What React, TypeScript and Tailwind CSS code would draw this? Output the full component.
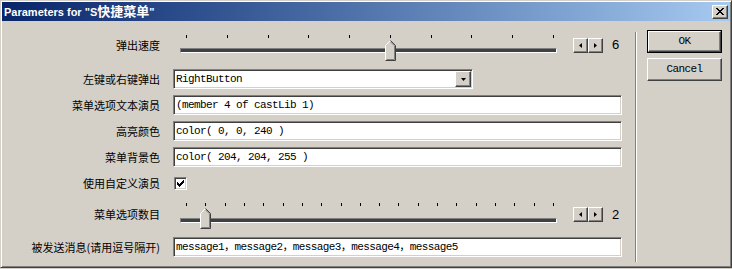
import React from 'react'

const sunken =
    'border border-t-[#808080] border-l-[#808080] border-b-white border-r-white shadow-[inset_1px_1px_0_#404040,inset_-1px_-1px_0_#d4d0c8] bg-white'
const raised =
    'border border-t-white border-l-white border-b-[#404040] border-r-[#404040] shadow-[inset_-1px_-1px_0_#808080] bg-[#d4d0c8]'
const mono = "[font-family:'Liberation_Mono','Noto_Sans_CJK_SC',monospace] text-[11px] tracking-[-0.6px] text-black"
const cjk = "[font-family:'Noto_Sans_CJK_SC',sans-serif] text-[11px] leading-none text-black"

const Thumb = () => (
    <svg width="11" height="21" viewBox="0 0 11 21">
        <polygon points="0,5 5,0 11,6 11,21 0,21" fill="#d4d0c8" />
        <polyline points="0.5,20.5 0.5,5.5 5.5,0.5" fill="none" stroke="#ffffff" />
        <polyline points="5.5,0.5 10.5,5.5 10.5,20.5 0.5,20.5" fill="none" stroke="#404040" />
        <polyline points="5.5,1.9 9.5,5.9 9.5,19.5 1.5,19.5" fill="none" stroke="#808080" />
    </svg>
)

const Slider = ({ count, index, trackTop }: { count: number; index: number; trackTop: number }) => {
    const first = 13
    const last = 380
    const step = (last - first) / (count - 1)
    return (
        <div className="relative w-[384px] h-full">
            {Array.from({ length: count }).map((_, i) => (
                <div
                    key={i}
                    className="absolute top-[5px] w-px h-[3px] bg-black"
                    style={{ left: Math.round(first + step * i) }}
                />
            ))}
            <div
                className="absolute left-[7px] right-0 h-[5px] bg-[#404040] border-t border-l border-t-[#808080] border-l-[#808080] border-b border-r border-b-white border-r-white"
                style={{ top: trackTop }}
            />
            <div className="absolute top-[10px]" style={{ left: Math.round(first + step * index) - 5 }}>
                <Thumb />
            </div>
        </div>
    )
}

const Spin = ({ value }: { value: string }) => (
    <div className="flex flex-row items-center ml-4">
        <div className={`w-[15px] h-[15px] flex items-center justify-center ${raised}`}>
            <svg width="3" height="5" viewBox="0 0 3 5">
                <polygon points="3,0 3,5 0,2.5" fill="#000" />
            </svg>
        </div>
        <div className={`w-[15px] h-[15px] flex items-center justify-center ${raised}`}>
            <svg width="3" height="5" viewBox="0 0 3 5">
                <polygon points="0,0 0,5 3,2.5" fill="#000" />
            </svg>
        </div>
        <span className="ml-[9px] [font-family:'Liberation_Sans',sans-serif] text-[13px] text-black">{value}</span>
    </div>
)

const Row = ({ label, className, children }: { label: string; className: string; children: React.ReactNode }) => (
    <div className={`flex flex-row items-center ${className}`}>
        <div className={`w-[158px] text-right whitespace-nowrap ${cjk}`}>{label}</div>
        <div className="ml-[13px] flex flex-row items-center h-full">{children}</div>
    </div>
)

const TextField = ({ value }: { value: string }) => (
    <div className={`w-[449px] h-[20px] flex items-center pl-[2px] ${sunken}`}>
        <span className={`${mono} whitespace-nowrap`}>{value}</span>
    </div>
)

const App: React.FC = () => {
    return (
        <div className="w-[732px] h-[269px] bg-[#d4d0c8] overflow-hidden">
            <div className="w-[732px] h-[268px] flex flex-col bg-[#d4d0c8] border-t border-l border-t-[#d4d0c8] border-l-[#d4d0c8] border-b border-r border-b-[#404040] border-r-[#404040] shadow-[inset_1px_1px_0_#ffffff,inset_-1px_-1px_0_#808080] p-px">
                {/* title bar */}
                <header className="h-[19px] flex flex-row items-center justify-between bg-gradient-to-r from-[#0a246a] to-[#a6caf0] pl-[2px] pr-[2px]">
                    <h1 className="[font-family:'Liberation_Sans','Noto_Sans_CJK_SC',sans-serif] text-[11px] font-bold text-white whitespace-nowrap leading-none">
                        Parameters for "S<span className="text-[13px]">快捷菜单</span>"
                    </h1>
                    <button type="button" className={`w-[16px] h-[14px] flex items-center justify-center ${raised}`}>
                        <svg width="8" height="7" viewBox="0 0 8 7" shapeRendering="crispEdges">
                            <path d="M0 0h2v1h-2zM6 0h2v1h-2zM1 1h2v1h-2zM5 1h2v1h-2zM2 2h4v1h-4zM3 3h2v1h-2zM2 4h4v1h-4zM1 5h2v1h-2zM5 5h2v1h-2zM0 6h2v1h-2zM6 6h2v1h-2z" fill="#000" />
                        </svg>
                    </button>
                </header>

                <div className="flex flex-row flex-1">
                    <section className="w-[633px] flex flex-col pt-[9px]">
                        <Row label="弹出速度" className="h-[30px]">
                            <Slider count={10} index={5} trackTop={18} />
                            <Spin value="6" />
                        </Row>

                        <Row label="左键或右键弹出" className="h-[20px] mt-[9px]">
                            <div className={`w-[300px] h-[20px] flex flex-row items-center justify-between pl-[2px] pr-px ${sunken}`}>
                                <span className={mono}>RightButton</span>
                                <div className={`w-[16px] h-[16px] flex items-center justify-center ${raised}`}>
                                    <svg width="5" height="3" viewBox="0 0 5 3">
                                        <polygon points="0,0 5,0 2.5,3" fill="#000" />
                                    </svg>
                                </div>
                            </div>
                        </Row>

                        <Row label="菜单选项文本演员" className="h-[20px] mt-[6px]">
                            <TextField value="(member 4 of castLib 1)" />
                        </Row>

                        <Row label="高亮颜色" className="h-[20px] mt-[6px]">
                            <TextField value="color( 0, 0, 240 )" />
                        </Row>

                        <Row label="菜单背景色" className="h-[20px] mt-[6px]">
                            <TextField value="color( 204, 204, 255 )" />
                        </Row>

                        <Row label="使用自定义演员" className="h-[20px] mt-[6px]">
                            <div className={`ml-px w-[13px] h-[13px] flex items-center justify-center ${sunken}`}>
                                <svg width="7" height="7" viewBox="0 0 7 7" shapeRendering="crispEdges">
                                    <path d="M6 0h1v3h-1zM5 1h1v3h-1zM4 2h1v3h-1zM3 3h1v3h-1zM2 4h1v3h-1zM1 3h1v3h-1zM0 2h1v3h-1z" fill="#000" />
                                </svg>
                            </div>
                        </Row>

                        <Row label="菜单选项数目" className="h-[33px] mt-[5px]">
                            <Slider count={20} index={1} trackTop={20} />
                            <Spin value="2" />
                        </Row>

                        <Row label="被发送消息(请用逗号隔开)" className="h-[20px] mt-[6px]">
                            <TextField value="message1，message2，message3，message4，message5" />
                        </Row>
                    </section>

                    {/* separator */}
                    <div className="w-[2px] h-[230px] mt-[11px] border-l border-l-[#808080] border-r border-r-white" />

                    <aside className="ml-[10px] pt-[9px] flex flex-col gap-[5px]">
                        <button type="button" className="w-[75px] h-[23px] border border-black">
                            <div className={`w-full h-full flex items-center justify-center ${raised}`}>
                                <span className={mono}>OK</span>
                            </div>
                        </button>
                        <button type="button" className={`w-[75px] h-[23px] flex items-center justify-center ${raised}`}>
                            <span className={mono}>Cancel</span>
                        </button>
                    </aside>
                </div>
            </div>
        </div>
    )
}

export default App
